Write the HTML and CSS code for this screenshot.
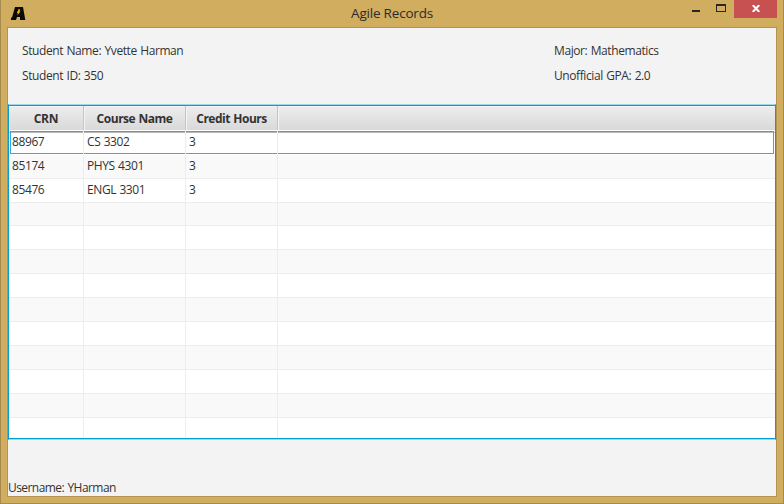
FILE: index.html
```html
<!DOCTYPE html>
<html lang="en">
<head>
<meta charset="utf-8">
<title>Agile Records</title>
<link rel="stylesheet" href="styles.css">
</head>
<body>
<div class="window">
  <header class="titlebar">
    <svg class="logo" width="15" height="13" viewBox="0 0 15 13"><path d="M4 0H12L14.300 13H9V10H6L5 13H0V10.500H1Z" fill="#0b0a06"/><path d="M7.500 2.300H9.300L8.500 4.500H9.500L6.300 8.300L6.800 6H5.800Z" fill="#f6ad1c"/></svg>
    <h1 class="title">Agile Records</h1>
    <div class="controls">
      <span class="minimize"></span>
      <span class="maximize"></span>
      <span class="close"><svg width="8" height="7" viewBox="0 0 8 7"><path d="M.7 0L7.300 7M7.300 0L.7 7" stroke="#fff" stroke-width="2"/></svg></span>
    </div>
  </header>
  <main class="content">
    <section class="info">
      <div class="student"><p class="name">Student Name: Yvette Harman</p><p class="sid">Student ID: 350</p></div>
      <div class="degree"><p class="major">Major: Mathematics</p><p class="gpa">Unofficial GPA: 2.0</p></div>
    </section>
    <section class="table">
      <div class="row head"><span class="crn">CRN</span><span class="cname">Course Name</span><span class="hours">Credit Hours</span><span></span></div>
      <div class="row focused"><span>88967</span><span>CS 3302</span><span>3</span><span></span></div>
      <div class="row"><span>85174</span><span>PHYS 4301</span><span>3</span><span></span></div>
      <div class="row"><span>85476</span><span>ENGL 3301</span><span>3</span><span></span></div>
      <div class="row"><span></span><span></span><span></span><span></span></div>
      <div class="row"><span></span><span></span><span></span><span></span></div>
      <div class="row"><span></span><span></span><span></span><span></span></div>
      <div class="row"><span></span><span></span><span></span><span></span></div>
      <div class="row"><span></span><span></span><span></span><span></span></div>
      <div class="row"><span></span><span></span><span></span><span></span></div>
      <div class="row"><span></span><span></span><span></span><span></span></div>
      <div class="row"><span></span><span></span><span></span><span></span></div>
      <div class="row"><span></span><span></span><span></span><span></span></div>
      <div class="row"><span></span><span></span><span></span><span></span></div>
    </section>
    <footer class="user">Username: YHarman</footer>
  </main>
</div>
</body>
</html>
```
FILE: styles.css
```css
* { box-sizing: border-box; }
body { margin: 0; font: 12px/16px "Open Sans", "Noto Sans", sans-serif; color: #333; }
p, h1 { margin: 0; font-weight: 400; }
.window { width: 784px; height: 504px; background: #d1ad60; border: 1px solid #a78a4d; border-top: 0; padding: 0 6px 6px; display: flex; flex-direction: column; }
.titlebar { height: 27px; display: grid; grid-template-columns: 90px 1fr 90px; flex: none; }
.logo { margin: 7px 0 0 4px; }
.title { font-size: 13.500px; line-height: 27px; text-align: center; color: #2b2b2b; letter-spacing: -.2px; }
.controls { display: flex; justify-content: flex-end; margin-left: -10px; }
.minimize { width: 8px; height: 2px; background: #2a2722; margin: 10px 16px 0 0; }
.maximize { width: 10px; height: 8px; border: 1px solid #2a2722; border-top-width: 2px; margin: 4px 8px 0 0; }
.close { width: 43px; height: 18px; background: #c75050; display: flex; justify-content: center; padding-top: 5px; }
.content { flex: 1; border: 1px solid #b49252; background: #f3f3f3; display: flex; flex-direction: column; }
.info { height: 76px; padding: 15px 14px 0; display: flex; letter-spacing: -.41px; word-spacing: .7px; }
.student { width: 532px; }
.info p { height: 25px; }
.table { height: 336px; border: 1px solid #039ed3; border-top-color: #9cd8ec; border-bottom-color: #9cd8ec; background: #fff; box-shadow: inset 0 1px #039ed3, inset 0 -1px #039ed3; padding: 1px 0; overflow: hidden; letter-spacing: -.4px; word-spacing: .6px; }
.row { height: 24px; display: grid; grid-template-columns: 75px 102px 92px 1fr; background: #fff; }
.row:nth-child(odd) { background: #f9f9f9; }
.row span { padding-left: 3px; line-height: 24px; border-right: 1px solid #ededed; border-bottom: 1px solid #ededed; white-space: nowrap; }
.row span:last-child { border-right: 0; }
.row:last-child { height: 20px; }
.row:last-child span { border-bottom: 0; }
.row.head { background: linear-gradient(#ededed, #d9d9d9); letter-spacing: -.48px; }
.row.head span { border-right-color: #c4c4c4; border-bottom-color: #b9b9b9; text-align: center; padding: 0; font-weight: 700; line-height: 26px; box-shadow: inset 1px 1px #f4f4f4; }
.row.head .crn { letter-spacing: -.2px; }
.row.focused span { border-bottom-color: #fff; position: relative; }
.row.focused span::after { content: ""; position: absolute; inset: 1px 0 0; border: solid #34acd8; border-width: 1px 0; }
.row.focused span:first-child::after { left: 1px; border-left-width: 1px; }
.row.focused span:last-child::after { right: 1px; border-right-width: 1px; }
.user { margin-top: auto; line-height: 16px; letter-spacing: -.56px; word-spacing: .8px; }
```
